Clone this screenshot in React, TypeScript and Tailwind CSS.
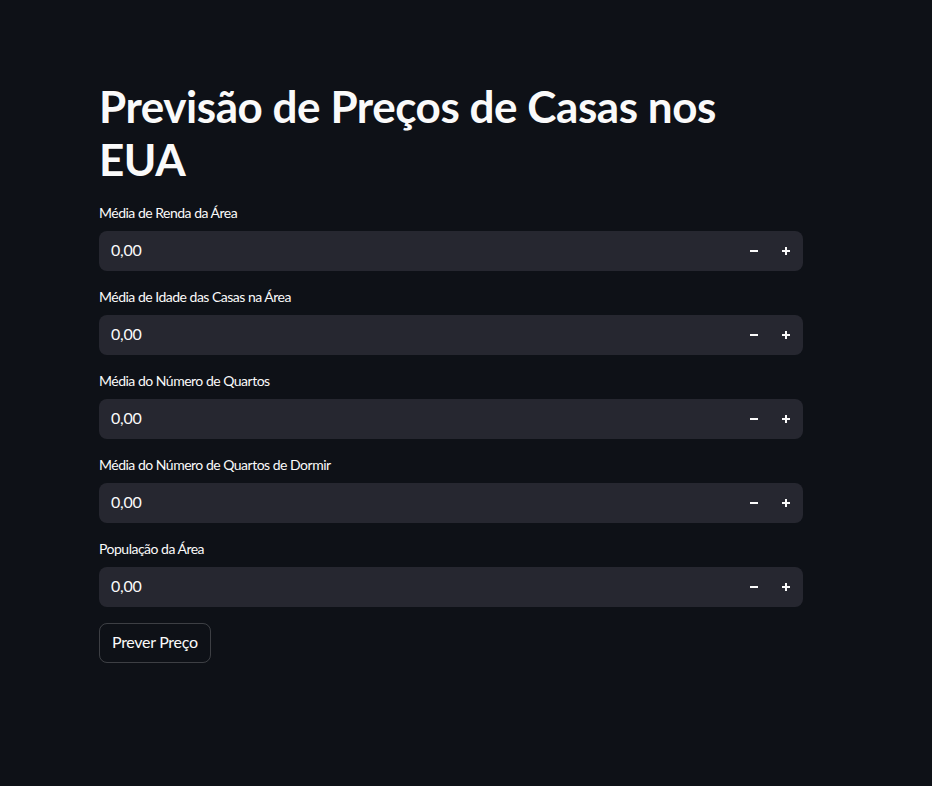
import React from "react";

const fields = [
  "Média de Renda da Área",
  "Média de Idade das Casas na Área",
  "Média do Número de Quartos",
  "Média do Número de Quartos de Dormir",
  "População da Área",
];

function NumberInput({ label }: { label: string }) {
  return (
    <div className="flex flex-col">
      <div className="h-6 mb-1 pb-[6px] flex items-center text-[14px] tracking-[-0.5px] text-[#fafafa]">{label}</div>
      <div className="h-10 rounded-lg bg-[#262730] flex items-center">
        <div className="flex-1 pl-3 pb-[2px] text-[16px] tracking-[-0.2px] text-[#fafafa]">0,00</div>
        <button className="w-8 h-10 flex items-center justify-center">
          <svg width="10" height="10" viewBox="0 0 10 10"><path d="M1 5h8" stroke="#fafafa" strokeWidth="2" /></svg>
        </button>
        <button className="w-8 h-10 flex items-center justify-center mr-px">
          <svg width="10" height="10" viewBox="0 0 10 10"><path d="M1 5h8M5 1v8" stroke="#fafafa" strokeWidth="2" /></svg>
        </button>
      </div>
    </div>
  );
}

export default function App() {
  return (
    <div className="min-h-[786px] bg-[#0e1117] text-[#fafafa]" style={{ fontFamily: "Lato, sans-serif" }}>
      <div className="w-[704px] ml-[99px] pt-[80px]">
        <h1 className="text-[44px] font-bold leading-[53px] tracking-[-0.45px] mb-[17px]">
          Previsão de Preços de Casas nos EUA
        </h1>
        <div className="flex flex-col gap-4">
          {fields.map((f) => (
            <NumberInput key={f} label={f} />
          ))}
          <div>
            <button className="h-10 px-3 pb-[2px] rounded-lg border border-[rgba(250,250,250,0.2)] text-[16px] tracking-[-0.3px]">Prever Preço</button>
          </div>
        </div>
      </div>
    </div>
  );
}
